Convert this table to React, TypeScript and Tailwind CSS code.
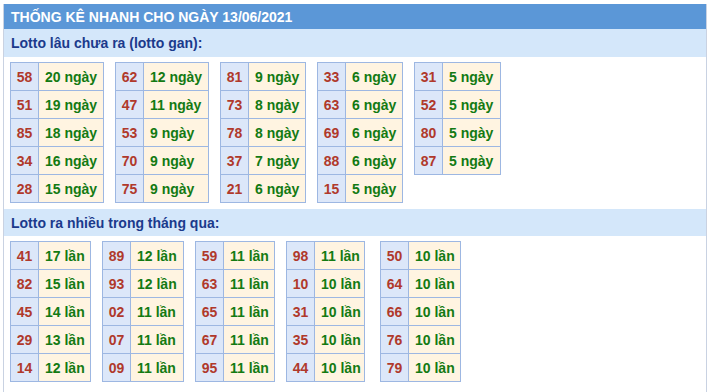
import React from "react";

type Row = [string, string];

const gan: Row[][] = [
  [["58", "20 ngày"], ["51", "19 ngày"], ["85", "18 ngày"], ["34", "16 ngày"], ["28", "15 ngày"]],
  [["62", "12 ngày"], ["47", "11 ngày"], ["53", "9 ngày"], ["70", "9 ngày"], ["75", "9 ngày"]],
  [["81", "9 ngày"], ["73", "8 ngày"], ["78", "8 ngày"], ["37", "7 ngày"], ["21", "6 ngày"]],
  [["33", "6 ngày"], ["63", "6 ngày"], ["69", "6 ngày"], ["88", "6 ngày"], ["15", "5 ngày"]],
  [["31", "5 ngày"], ["52", "5 ngày"], ["80", "5 ngày"], ["87", "5 ngày"]],
];
const ganCls = ["w-[94px]", "w-[94px] ml-[11px]", "w-[86px] ml-[11px]", "w-[86px] ml-[11px]", "w-[87px] ml-[11px]"];

const nhieu: Row[][] = [
  [["41", "17 lần"], ["82", "15 lần"], ["45", "14 lần"], ["29", "13 lần"], ["14", "12 lần"]],
  [["89", "12 lần"], ["93", "12 lần"], ["02", "11 lần"], ["07", "11 lần"], ["09", "11 lần"]],
  [["59", "11 lần"], ["63", "11 lần"], ["65", "11 lần"], ["67", "11 lần"], ["95", "11 lần"]],
  [["98", "11 lần"], ["10", "10 lần"], ["31", "10 lần"], ["35", "10 lần"], ["44", "10 lần"]],
  [["50", "10 lần"], ["64", "10 lần"], ["66", "10 lần"], ["76", "10 lần"], ["79", "10 lần"]],
];
const nhieuCls = ["w-[81px]", "w-[82px] ml-[11px]", "w-[80px] ml-[11px]", "w-[79px] ml-[11px]", "w-[81px] ml-[15px]"];

function Block({ rows, cls }: { rows: Row[]; cls: string }) {
  return (
    <div className={`grid grid-cols-[28px_1fr] self-start border-l border-t border-[#9db7e2] ${cls}`}>
      {rows.map(([n, v], i) => (
        <React.Fragment key={i}>
          <div className="h-[28px] flex items-center justify-center border-r border-b border-[#9db7e2] bg-[#dce7f9] text-[#b0392b]">
            {n}
          </div>
          <div className="h-[28px] pl-[6px] flex items-center border-r border-b border-[#9db7e2] bg-[#fff4e1] text-[#137a13] whitespace-nowrap">
            {v}
          </div>
        </React.Fragment>
      ))}
    </div>
  );
}

export default function App() {
  return (
    <div
      className="bg-white w-[714px] h-[392px] pt-[4px] pl-[3px]"
      style={{ fontFamily: '"Liberation Sans", Arial, sans-serif' }}
    >
      <div className="w-[704px] border-r border-l border-[#c9d2e2] pb-[10px] font-bold text-[14px] leading-none">
        <div className="h-[25px] bg-[#5b97d7] text-white flex items-center pl-[7px]">
          THỐNG KÊ NHANH CHO NGÀY 13/06/2021
        </div>
        <div className="h-[28px] bg-[#d4e7fa] text-[#1b3a8c] flex items-center pl-[7px]">
          Lotto lâu chưa ra (lotto gan):
        </div>
        <div className="flex pl-[6px] mt-[5px]">
          {gan.map((r, i) => (
            <Block key={i} rows={r} cls={ganCls[i]} />
          ))}
        </div>
        <div className="h-[27px] bg-[#d4e7fa] text-[#1b3a8c] flex items-center pl-[7px] mt-[6px]">
          Lotto ra nhiều trong tháng qua:
        </div>
        <div className="flex pl-[6px] mt-[5px]">
          {nhieu.map((r, i) => (
            <Block key={i} rows={r} cls={nhieuCls[i]} />
          ))}
        </div>
      </div>
    </div>
  );
}
